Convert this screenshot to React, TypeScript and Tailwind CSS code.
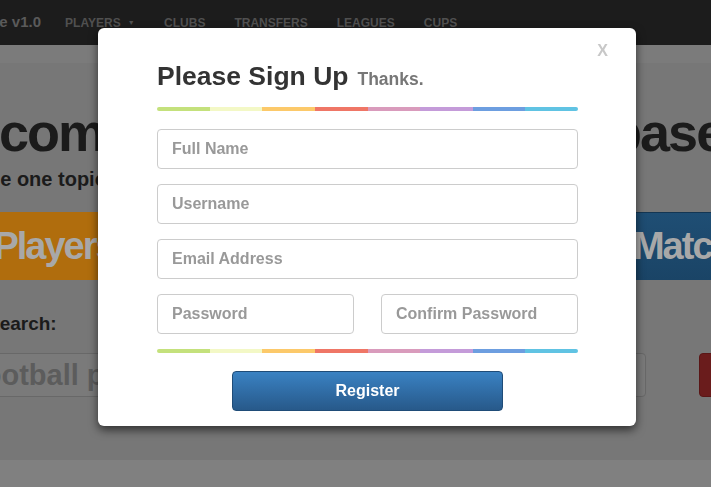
import { useState } from 'react';

const RAINBOW = [
  'bg-[#c4e17c]',
  'bg-[#f3f8c6]',
  'bg-[#fcc96a]',
  'bg-[#ef7666]',
  'bg-[#d99bbc]',
  'bg-[#c49bd9]',
  'bg-[#6d9ee0]',
  'bg-[#60c3e3]',
];

const NAV_ITEMS = ['Clubs', 'Transfers', 'Leagues', 'Cups'];

function RainbowBar() {
  return (
    <div className="flex h-[4px] rounded-full overflow-hidden">
      {RAINBOW.map((c) => (
        <div key={c} className={`flex-1 ${c}`} />
      ))}
    </div>
  );
}

function Field({ placeholder, type = 'text', className = '' }: { placeholder: string; type?: string; className?: string }) {
  return (
    <input
      type={type}
      placeholder={placeholder}
      className={`h-[40px] rounded-[4px] border border-[#cccccc] bg-white px-[14px] text-[16px] font-bold text-[#333] outline-none placeholder:text-[#999999] ${className}`}
    />
  );
}

function SignUpModal({ onClose }: { onClose: () => void }) {
  return (
    <div className="fixed left-[98px] top-[28px] w-[538px] rounded-[6px] bg-white pt-[15px] pb-[15px] shadow-[0_4px_10px_rgba(0,0,0,0.6)]">
      {/* Close */}
      <div className="flex h-[16px] justify-end pr-[28px]">
        <button
          onClick={onClose}
          className="h-[16px] text-[16px] leading-[16px] font-bold text-[#c8c8c8]"
        >
          X
        </button>
      </div>

      <div className="pl-[59px] pr-[58px]">
        <div className="mt-[2px] flex h-[30px] items-baseline overflow-hidden">
          <h2 className="text-[26.5px] leading-[30px] font-bold text-[#333333]">Please Sign Up</h2>
          <span className="ml-[9px] text-[17.5px] leading-[18px] font-bold text-[#777777]">Thanks.</span>
        </div>

        <div className="mt-[16px]">
          <RainbowBar />
        </div>

        <form className="mt-[18px] flex flex-col gap-[15px]" onSubmit={(e) => e.preventDefault()}>
          <Field placeholder="Full Name" />
          <Field placeholder="Username" />
          <Field placeholder="Email Address" type="email" />
          <div className="flex justify-between">
            <Field placeholder="Password" type="password" className="w-[197px]" />
            <Field placeholder="Confirm Password" type="password" className="w-[197px]" />
          </div>
        </form>

        <div className="mt-[15px]">
          <RainbowBar />
        </div>

        <button className="mx-auto mt-[18px] flex h-[40px] w-[271px] items-center justify-center rounded-[4px] border border-[#1f4c78] bg-gradient-to-b from-[#3a82c3] to-[#27598a] text-[16px] font-bold text-white">
          Register
        </button>
      </div>
    </div>
  );
}

export default function App() {
  const [open, setOpen] = useState(true);

  return (
    <div className="flex min-h-screen w-full flex-col overflow-hidden bg-[#808080] font-['Liberation_Sans',Arial,sans-serif]">
      {/* Navbar */}
      <nav className="flex h-[45px] items-center bg-[#1c1c1c]">
        <span className="-ml-[59px] text-[15px] font-bold text-[#5a5a5a] whitespace-nowrap">Database v1.0</span>
        <div className="ml-[9px] flex items-center">
          <span className="flex items-center px-[15px] text-[12px] font-bold uppercase text-[#505050]">
            Players
            <span className="ml-[7px] text-[7px] leading-none">▼</span>
          </span>
          {NAV_ITEMS.map((item) => (
            <span key={item} className="px-[14.5px] text-[12px] font-bold uppercase text-[#505050]">
              {item}
            </span>
          ))}
        </div>
      </nav>
      <div className="h-[18px] bg-[#7b7b7b]" />

      {/* Page body */}
      <main className="h-[397px] bg-[#777777]">
        <h1 className="-ml-[90px] mt-[42px] whitespace-nowrap text-[54px] leading-[54px] font-bold tracking-[-2px] text-[#1b1b1b]">
          Welcome to the Football Database
        </h1>
        <p className="-ml-[62px] mt-[8px] whitespace-nowrap text-[20px] leading-[24px] font-bold text-[#1b1b1b]">
          Choose one topic to browse
        </p>

        <div className="-ml-[46px] mt-[21px] flex gap-[16px]">
          <div className="flex h-[68px] w-[200px] shrink-0 items-center justify-center bg-[#b06d0d] text-[38px] font-bold tracking-[-2px] text-[#a8a8a8]">
            Players
          </div>
          <div className="flex h-[68px] w-[200px] shrink-0 items-center justify-center bg-[#2d6b1f] text-[38px] font-bold tracking-[-2px] text-[#a8a8a8]">
            Clubs
          </div>
          <div className="flex h-[68px] w-[200px] shrink-0 items-center justify-center bg-[#6b1f1f] text-[38px] font-bold tracking-[-2px] text-[#a8a8a8]">
            Leagues
          </div>
          <div className="flex h-[68px] w-[200px] shrink-0 items-center justify-center border-t border-[#143653] bg-gradient-to-b from-[#1f4e74] to-[#1a4466] text-[38px] font-bold tracking-[-2px] text-[#a8a8a8]">
            Matches
          </div>
        </div>

        <p className="-ml-[13px] mt-[33px] text-[19px] leading-[22px] font-bold text-[#1b1b1b]">Search:</p>

        <div className="mt-[18px] flex items-center gap-[53px]">
          <input
            placeholder="Football players, clubs..."
            className="-ml-[40px] h-[44px] w-[686px] shrink-0 rounded-[4px] border border-[#686868] bg-[#7a7a7a] pl-[5px] text-[29px] font-bold text-[#5c5c5c] outline-none placeholder:text-[#5c5c5c]"
          />
          <button className="h-[44px] w-[80px] shrink-0 rounded-[4px] border border-[#5a1616] bg-[#6a1c1c] text-[16px] font-bold text-[#aaaaaa]">
            Go
          </button>
        </div>
      </main>
      <footer className="flex-1 bg-[#808080]" />

      {open && <SignUpModal onClose={() => setOpen(false)} />}
    </div>
  );
}
